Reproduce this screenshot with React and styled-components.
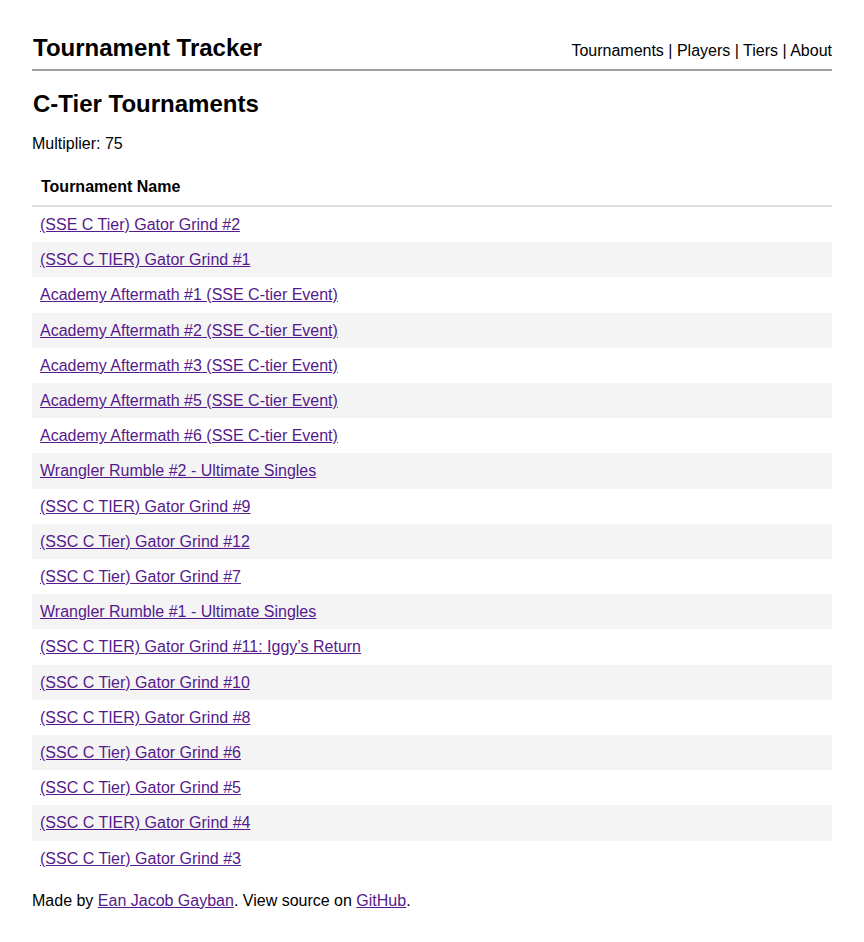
import styled, { createGlobalStyle } from "styled-components";

const GlobalStyle = createGlobalStyle`
  body {
    margin: 0;
    font-family: "Liberation Sans", Arial, sans-serif;
    color: #000;
    background: #fff;
  }
`;

const Page = styled.div`
  width: 800px;
  margin: 0 auto;
`;

const Header = styled.header`
  display: flex;
  justify-content: space-between;
  align-items: baseline;
  padding: 34px 0 8px;
  border-bottom: 2px solid #a0a0a0;
`;

const Brand = styled.h1`
  margin: 0 0 0 1px;
  font-size: 24px;
  line-height: 27px;
  font-weight: bold;
`;

const Nav = styled.nav`
  font-size: 16px;
  line-height: 18px;
`;

const NavLink = styled.a`
  color: #000;
  text-decoration: none;
`;

const Title = styled.h2`
  margin: 19px 0 0 1px;
  font-size: 24px;
  line-height: 27px;
  font-weight: bold;
`;

const Multiplier = styled.p`
  margin: 18px 0 0;
  font-size: 16px;
  line-height: 18px;
`;

const Table = styled.table`
  width: 100%;
  margin-top: 16px;
  border-collapse: collapse;
  font-size: 16px;
`;

const Th = styled.th`
  text-align: left;
  padding: 9px 9px;
  line-height: 18px;
  font-weight: bold;
  border-bottom: 2px solid #dddddd;
`;

const Row = styled.tr`
  background: ${(p) => (p.$striped ? "#f4f4f4" : "#fff")};
`;

const Td = styled.td`
  padding: 8px 8px;
  line-height: 19.2px;
`;

const Link = styled.a`
  color: #551a8b;
  text-decoration: underline;
`;

const Footer = styled.footer`
  margin-top: 16px;
  font-size: 16px;
  line-height: 18px;
  padding-bottom: 30px;
`;

const tournaments = [
  "(SSE C Tier) Gator Grind #2",
  "(SSC C TIER) Gator Grind #1",
  "Academy Aftermath #1 (SSE C-tier Event)",
  "Academy Aftermath #2 (SSE C-tier Event)",
  "Academy Aftermath #3 (SSE C-tier Event)",
  "Academy Aftermath #5 (SSE C-tier Event)",
  "Academy Aftermath #6 (SSE C-tier Event)",
  "Wrangler Rumble #2 - Ultimate Singles",
  "(SSC C TIER) Gator Grind #9",
  "(SSC C Tier) Gator Grind #12",
  "(SSC C Tier) Gator Grind #7",
  "Wrangler Rumble #1 - Ultimate Singles",
  "(SSC C TIER) Gator Grind #11: Iggy’s Return",
  "(SSC C Tier) Gator Grind #10",
  "(SSC C TIER) Gator Grind #8",
  "(SSC C Tier) Gator Grind #6",
  "(SSC C Tier) Gator Grind #5",
  "(SSC C TIER) Gator Grind #4",
  "(SSC C Tier) Gator Grind #3",
];

const App = () => {
  return (
    <>
      <GlobalStyle />
      <Page>
        <Header>
          <Brand>Tournament Tracker</Brand>
          <Nav>
            <NavLink href="#">Tournaments</NavLink> | <NavLink href="#">Players</NavLink> |{" "}
            <NavLink href="#">Tiers</NavLink> | <NavLink href="#">About</NavLink>
          </Nav>
        </Header>

        <Title>C-Tier Tournaments</Title>
        <Multiplier>Multiplier: 75</Multiplier>

        <Table>
          <thead>
            <tr>
              <Th>Tournament Name</Th>
            </tr>
          </thead>
          <tbody>
            {tournaments.map((name, i) => (
              <Row key={i} $striped={i % 2 === 1}>
                <Td>
                  <Link href="#">{name}</Link>
                </Td>
              </Row>
            ))}
          </tbody>
        </Table>

        <Footer>
          Made by <Link href="#">Ean Jacob Gayban</Link>. View source on <Link href="#">GitHub</Link>.
        </Footer>
      </Page>
    </>
  );
};

export default App;
